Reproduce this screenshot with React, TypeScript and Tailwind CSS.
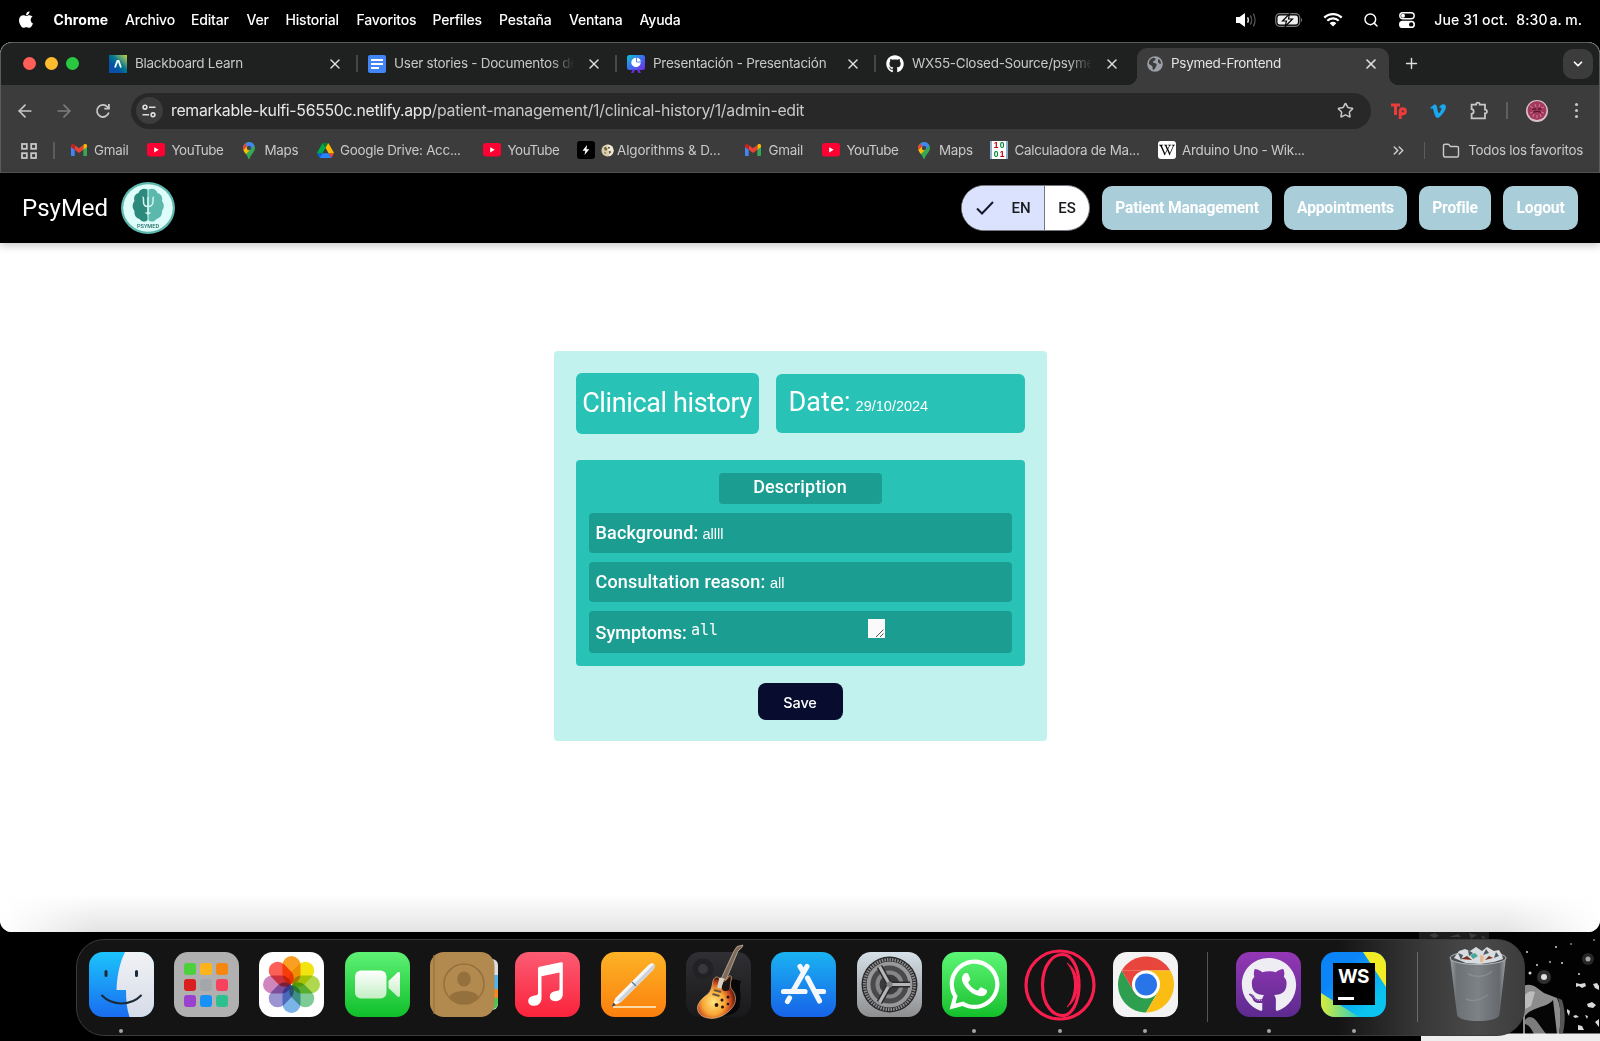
import React from "react";
import { FaApple, FaGithub, FaVimeoV, FaWikipediaW, FaWhatsapp } from "react-icons/fa";
import {
  ArrowLeft,
  ArrowRight,
  ChevronDown,
  ChevronsRight,
  Folder,
  Plus,
  Search,
  Star,
  X,
} from "lucide-react";

/* ---------- small icons ---------- */

const Gmail = () => (
  <svg viewBox="0 0 24 18" className="h-[12px] w-[16px]">
    <path d="M0 2v14.4C0 17.300.7 18 1.600 18H5.500V8.600z" fill="#4285f4" />
    <path d="M18.500 18h3.900c.9 0 1.600-.7 1.600-1.600V2l-5.500 6.600z" fill="#34a853" />
    <path d="M18.500 1.600v7L24 4.500V2.500c0-2-2.300-3.200-4-2z" fill="#fbbc04" />
    <path d="M5.500 8.600v-7L12 6.500l6.500-4.900v7L12 13.500z" fill="#ea4335" />
    <path d="M0 2.500v2l5.500 4.100v-7L4 .5C2.300-.7 0 .5 0 2.500z" fill="#c5221f" />
  </svg>
);

const YouTube = () => (
  <svg viewBox="0 0 18 14" className="h-[14px] w-[18px]">
    <rect width="18" height="13.500" rx="3" fill="#ff0033" />
    <path d="M7.200 4.200v5.200l4.500-2.600z" fill="#fff" />
  </svg>
);

const MapPin = () => (
  <svg viewBox="0 0 12 17" className="h-[17px] w-[12px]">
    <defs>
      <clipPath id="pin">
        <path d="M6 0a6 6 0 0 1 6 6c0 2.500-1.300 3.900-2.700 5.700C7.700 13.700 7.100 15 6.800 16.200c-.2 1-1.400 1-1.600 0C4.900 15 4.300 13.700 2.700 11.700 1.300 9.900 0 8.500 0 6a6 6 0 0 1 6-6z" />
      </clipPath>
    </defs>
    <g clipPath="url(#pin)">
      <rect width="12" height="17" fill="#34a853" />
      <path d="M0 4l7-6 6 1v3L6 9z" fill="#4285f4" />
      <path d="M-1 2.500L2 1 4.500 5 1 9-1 7z" fill="#ea4335" />
      <path d="M0 8.500L4.500 4 8 7 2.500 12.500z" fill="#fbbc04" />
    </g>
    <circle cx="6" cy="6" r="2.200" fill="#37474f" />
  </svg>
);

const Drive = () => (
  <svg viewBox="0 0 87.300 78" className="h-[15px] w-[17px]">
    <path d="M6.600 66.850l3.850 6.650c.8 1.400 1.950 2.500 3.300 3.300L27.500 53H0c0 1.550.4 3.100 1.200 4.500z" fill="#0066da" />
    <path d="M43.650 25L29.900 1.200c-1.350.8-2.500 1.900-3.300 3.300L1.200 48.500A9 9 0 0 0 0 53h27.500z" fill="#00ac47" />
    <path d="M73.550 76.800c1.350-.8 2.500-1.900 3.300-3.300l1.600-2.750L86.100 57.500c.8-1.400 1.200-2.950 1.200-4.500H59.800l5.850 11.500z" fill="#ea4335" />
    <path d="M43.650 25L57.400 1.200C56.050.4 54.500 0 52.900 0H34.400c-1.600 0-3.150.45-4.500 1.200z" fill="#00832d" />
    <path d="M59.800 53H27.500L13.750 76.800c1.350.8 2.900 1.200 4.500 1.200h50.800c1.600 0 3.150-.45 4.500-1.200z" fill="#2684fc" />
    <path d="M73.400 26.500L60.700 4.500c-.8-1.400-1.950-2.500-3.300-3.300L43.650 25 59.800 53h27.450c0-1.550-.4-3.100-1.200-4.500z" fill="#ffba00" />
  </svg>
);

const Bolt = () => (
  <span className="flex items-center gap-[6px]">
    <svg viewBox="0 0 18 18" className="size-[18px]">
      <rect width="18" height="18" rx="3" fill="#000" />
      <path d="M10 4L5.500 9.700h2.800L7.500 14l4.800-5.700H9.500z" fill="#fff" />
    </svg>
    <svg viewBox="0 0 14 14" className="size-[13px]">
      <circle cx="7" cy="7" r="6.500" fill="#d8cda8" />
      <path d="M7 .5A6.500 6.500 0 0 1 13.500 7c0 3-2 5.500-4.500 6.200L7.500 9z" fill="#f1ecdb" />
      <path d="M3 4l2-1 2 2-1 2-2 0zM8 8l2-1 1 2-2 2zM3 9l2 0 0 2z" fill="#77683f" />
      <circle cx="8.500" cy="4" r="1" fill="#4b4330" />
    </svg>
  </span>
);

const Matrix = () => (
  <span className="grid h-[18px] w-[18px] grid-cols-2 grid-rows-2 border-x-2 border-[#8fb0cc] bg-white px-px text-center font-['Liberation_Sans'] text-[8.500px] font-bold leading-[9px] tracking-normal">
    <span className="text-red-700">1</span>
    <span className="text-green-700">0</span>
    <span className="text-green-700">0</span>
    <span className="text-red-700">1</span>
  </span>
);

const Wiki = () => (
  <span className="flex size-[18px] items-center justify-center rounded-[3px] bg-white text-black">
    <FaWikipediaW size={16} />
  </span>
);

const Blackboard = () => (
  <span className="flex size-[18px] items-center justify-center bg-linear-to-tr from-[#0a4fa8] from-30% via-[#0b7f86] via-60% to-[#b9d51c]">
    <svg viewBox="0 0 18 18" className="size-[18px]">
      <path d="M6 12.500L8.400 6h1.200l2.400 6.500" fill="none" stroke="#fff" strokeWidth="1.800" />
    </svg>
  </span>
);

const Docs = () => (
  <span className="flex size-[18px] flex-col justify-center gap-[2px] rounded-[2px] bg-[#4285f4] pl-[3px]">
    <span className="h-[2px] w-[12px] bg-white" />
    <span className="h-[2px] w-[12px] bg-white" />
    <span className="h-[2px] w-[8px] bg-white" />
  </span>
);

const Slides = () => (
  <svg viewBox="0 0 18 18" className="size-[18px]">
    <defs>
      <linearGradient id="sl" x1="0" y1="0" x2="1" y2="1">
        <stop offset="0" stopColor="#10c5d0" />
        <stop offset=".5" stopColor="#3b6df0" />
        <stop offset="1" stopColor="#7a2be0" />
      </linearGradient>
    </defs>
    <rect width="18" height="15" rx="2.500" fill="url(#sl)" />
    <path d="M6 14l-2 4h2.500L8 15zM12 14l2 4h-2.500L10 15z" fill="#6b2fd9" />
    <circle cx="9" cy="7.500" r="4.700" fill="#fff" />
    <path d="M9.500 2.300v4.700h4.700a4.700 4.700 0 0 0-4.700-4.700z" fill="#fff" stroke="#3b7df0" strokeWidth=".9" />
  </svg>
);

const Globe = () => (
  <svg viewBox="0 0 16 16" className="size-[16px]">
    <circle cx="8" cy="8" r="7.800" fill="#9aa0a6" />
    <path d="M6.500 1.800c1.500.2 2.500 1 2 2C8 5 6 4.700 6 6s2.300 1 3.300 1.800C10.500 9 9 10.300 8.500 11.500 8 13 7 14 5.800 13.500c-.8-1 .3-2.300-.6-3.300C4.200 9.200 2.200 8.500 1.800 7.200 2 4.500 4 2.200 6.500 1.800zM11.500 3c1.500 1 2.500 2.700 2.600 4.500-1 .6-2 .2-2.600-.7-.7-1-.8-2.800 0-3.800z" fill="#3c3c3c" />
  </svg>
);

const Sep = ({ className = "" }: { className?: string }) => (
  <span className={`h-[17px] w-[1.500px] shrink-0 bg-[#5b5d5d] ${className}`} />
);

/* ---------- macOS menu bar ---------- */

const menus = [
  ["Archivo", "w-[66px]"],
  ["Editar", "w-[55.500px]"],
  ["Ver", "w-[39px]"],
  ["Historial", "w-[71px]"],
  ["Favoritos", "w-[76px]"],
  ["Perfiles", "w-[66.500px]"],
  ["Pestaña", "w-[70px]"],
  ["Ventana", "w-[70.500px]"],
  ["Ayuda", "w-[50px]"],
];

const MenuBar = () => (
  <div className="flex h-[42px] shrink-0 items-center bg-black pb-[3px] text-[14px] font-medium text-white">
    <FaApple className="ml-[18px] mr-[19.500px] h-[19px] w-[16px]" />
    <span className="w-[71.500px] font-bold tracking-[0.100px]">Chrome</span>
    {menus.map(([label, w]) => (
      <span key={label} className={`${w} tracking-[-0.200px]`}>
        {label}
      </span>
    ))}
    <div className="ml-auto flex items-center pr-[18px]">
      <svg viewBox="0 0 22 16" className="mr-[18px] h-[16px] w-[22px]">
        <path d="M1 5h3.500L10 1v14l-5.500-4H1z" fill="#fff" />
        <path d="M12.500 5.300c1 1.500 1 3.900 0 5.400" stroke="#ddd" strokeWidth="1.400" fill="none" />
        <path d="M15.300 3.500c1.700 2.500 1.700 6.500 0 9M18.200 1.700c2.400 3.700 2.400 8.900 0 12.600" stroke="#555" strokeWidth="1.400" fill="none" />
      </svg>
      <svg viewBox="0 0 28 14" className="mr-[20px] h-[14px] w-[28px]">
        <rect x=".7" y=".7" width="24" height="12.600" rx="4" fill="none" stroke="#777" strokeWidth="1.200" />
        <rect x="2.500" y="2.500" width="20.400" height="9" rx="2.300" fill="#eee" />
        <path d="M26 5v4c1.500-.5 1.500-3.500 0-4z" fill="#777" />
        <path d="M14.500.8L7.500 8h4l-1.300 5.400L17.500 6h-4z" fill="#eee" stroke="#000" strokeWidth="1.200" />
      </svg>
      <svg viewBox="0 0 20 15" className="mr-[20px] h-[15px] w-[20px]">
        <path d="M1.300 5.600a12.400 12.400 0 0 1 17.400 0M4.300 8.800a8.100 8.100 0 0 1 11.400 0" fill="none" stroke="#fff" strokeWidth="2.300" />
        <path d="M6.700 11.200a4.700 4.700 0 0 1 6.600 0L10 14.500z" fill="#fff" />
      </svg>
      <Search className="mr-[20px] size-[16px]" strokeWidth={2.200} />
      <svg viewBox="0 0 16 16" className="mr-[19px] h-[16px] w-[16px]">
        <rect x=".8" y=".8" width="14.400" height="6" rx="3" fill="none" stroke="#fff" strokeWidth="1.400" />
        <circle cx="4" cy="3.800" r="2" fill="#fff" />
        <rect x="0" y="8.800" width="16" height="7.200" rx="3.600" fill="#fff" />
        <circle cx="12.200" cy="12.400" r="2.200" fill="#000" />
      </svg>
      <span className="tracking-[0.150px]">Jue 31 oct.</span>
      <span className="ml-[8px] tracking-[0.100px]">8:30</span>
      <span className="ml-[2px]">a. m.</span>
    </div>
  </div>
);

/* ---------- Chrome window ---------- */

const tabs = [
  { icon: <Blackboard />, label: "Blackboard Learn", fade: false, sep: true },
  { icon: <Docs />, label: "User stories - Documentos de", fade: true, sep: true },
  { icon: <Slides />, label: "Presentación - Presentación", fade: false, sep: true },
  { icon: <FaGithub size={18} color="#fff" />, label: "WX55-Closed-Source/psyme", fade: true, sep: false },
];

const TabStrip = () => (
  <div className="flex h-[42px] items-center bg-[#1f2020] pb-px text-[13.500px] tracking-[-0.270px] text-[#c7c7c7]">
    <div className="flex w-[108px] shrink-0 gap-[8.500px] pl-[22px]">
      <span className="size-[13px] rounded-full bg-[#ff5f57]" />
      <span className="size-[13px] rounded-full bg-[#febc2e]" />
      <span className="size-[13px] rounded-full bg-[#28c840]" />
    </div>
    {tabs.map((t) => (
      <div key={t.label} className="flex w-[259px] shrink-0 items-center">
        {t.icon}
        <span
          className={`ml-[8px] w-[184px] overflow-hidden whitespace-nowrap ${
            t.fade ? "mask-r-from-85% mask-r-to-98%" : ""
          }`}
        >
          {t.label}
        </span>
        <X className="ml-[8px] size-[16px] text-[#dedede]" strokeWidth={2.200} />
        {t.sep && <Sep className="ml-[13px] bg-[#464848]" />}
      </div>
    ))}
    <div className="relative -mb-px -ml-[8.500px] flex h-[37px] w-[252px] shrink-0 items-center self-end rounded-t-[10px] bg-[#3c3c3c] pb-[6px] pl-[10px] text-[#e3e3e3]">
      <span className="absolute -left-[10px] bottom-0 size-[10px] bg-[radial-gradient(circle_at_0_0,#1f2020_10px,#3c3c3c_10.500px)]" />
      <span className="absolute -right-[10px] bottom-0 size-[10px] bg-[radial-gradient(circle_at_100%_0,#1f2020_10px,#3c3c3c_10.500px)]" />
      <Globe />
      <span className="ml-[8.500px] w-[192px] tracking-[-0.300px]">Psymed-Frontend</span>
      <X className="size-[16px]" strokeWidth={2.400} />
    </div>
    <Plus className="ml-[14px] size-[17px] text-[#dedede]" strokeWidth={2} />
    <span className="ml-auto mr-[6px] flex size-[30px] items-center justify-center rounded-[10px] bg-[#3c3c3c]">
      <ChevronDown className="size-[14px] text-white" strokeWidth={3} />
    </span>
  </div>
);

const Toolbar = () => (
  <div className="flex h-[50px] items-center pt-px text-[#c7c7c7]">
    <ArrowLeft className="ml-[13.500px] size-[20px]" strokeWidth={2} />
    <ArrowRight className="ml-[19px] size-[20px] text-[#7d7d7d]" strokeWidth={2} />
    <svg viewBox="0 0 16 16" className="ml-[21px] size-[16px]">
      <path d="M13.800 9.500A6 6 0 1 1 12.500 4L14 5.500" fill="none" stroke="currentColor" strokeWidth="1.800" />
      <path d="M14.800 1v5.500H9.300V4.800H13V1z" fill="currentColor" />
    </svg>
    <div className="ml-[20px] flex h-[36px] w-[1240px] items-center rounded-full bg-[#282828] pl-[5px]">
      <span className="flex size-[27px] items-center justify-center rounded-full bg-[#3c3c3c]">
        <svg viewBox="0 0 14 14" className="size-[14px]" fill="none" stroke="#dedede" strokeWidth="1.600">
          <circle cx="3" cy="3.200" r="1.900" />
          <path d="M7 3.200h6.500M.5 10.800H7" />
          <circle cx="11" cy="10.800" r="1.900" />
        </svg>
      </span>
      <span className="ml-[8.500px] text-[15.800px] tracking-[-0.280px] text-[#c7c7c7]">
        <span className="text-[#e8e8e8]">remarkable-kulfi-56550c.netlify.app</span>
        /patient-management/1/clinical-history/1/admin-edit
      </span>
      <Star className="ml-auto mr-[17px] size-[17px]" strokeWidth={2.200} />
    </div>
    <svg viewBox="0 0 16 16" className="ml-[20.500px] size-[16px]" fill="none" stroke="#ec3b3b" strokeWidth="3">
      <path d="M0 2h9M4.500 2v10" />
      <circle cx="11.800" cy="8.300" r="2.600" />
      <path d="M9.200 8v8" />
    </svg>
    <FaVimeoV className="ml-[22px] text-[#17a8ef]" size={18} />
    <svg viewBox="0 0 18 18" className="ml-[22.500px] size-[19px]" fill="none" stroke="currentColor" strokeWidth="1.700">
      <path d="M1.500 3.500h4.300c-.4-2.500 3.800-2.500 3.400 0h5v4.700c2.500-.4 2.500 3.900 0 3.500v4.800H1.500v-4.300c2.700-.3 2.700-4.200 0-4.500z" />
    </svg>
    <Sep className="ml-[17.500px] bg-[#5f5f5f]" />
    <svg viewBox="0 0 22 22" className="ml-[18px] size-[22px]">
      <circle cx="11" cy="11" r="11" fill="#d9c3cb" />
      <circle cx="11" cy="10.500" r="9.500" fill="#a33a5e" />
      <path d="M4 6l3 2M9 4l1 3M14 4l-1 3M18 7l-3 1M4 13l3-1M7 17l1-3M11 18v-3M15 17l-1-3M18 13l-3-1" stroke="#d88ba3" strokeWidth=".8" />
      <path d="M6.500 9h3.500M12 9h3.500M7 12.500c2.500-1.300 5.500-1.300 8 0" stroke="#5b1730" strokeWidth="1.300" fill="none" />
    </svg>
    <span className="ml-[27px] flex flex-col gap-[3px]">
      <span className="size-[3px] rounded-full bg-[#c7c7c7]" />
      <span className="size-[3px] rounded-full bg-[#c7c7c7]" />
      <span className="size-[3px] rounded-full bg-[#c7c7c7]" />
    </span>
  </div>
);

const bookmarks = [
  { icon: <Gmail />, label: "Gmail", w: "w-[76.500px]", g: "gap-[7.500px]" },
  { icon: <YouTube />, label: "YouTube", w: "w-[96px] tracking-[-0.450px]", g: "gap-[6.500px]" },
  { icon: <MapPin />, label: "Maps", w: "w-[73.500px]", g: "gap-[9.500px]" },
  { icon: <Drive />, label: "Google Drive: Acc...", w: "w-[166.500px]", g: "gap-[6.500px]" },
  { icon: <YouTube />, label: "YouTube", w: "w-[94px] tracking-[-0.450px]", g: "gap-[6.500px]" },
  { icon: <Bolt />, label: "Algorithms & D...", w: "w-[168px] tracking-[-0.100px]", g: "gap-[3px]" },
  { icon: <Gmail />, label: "Gmail", w: "w-[77px]", g: "gap-[7.500px]" },
  { icon: <YouTube />, label: "YouTube", w: "w-[96px] tracking-[-0.450px]", g: "gap-[6.500px]" },
  { icon: <MapPin />, label: "Maps", w: "w-[72px]", g: "gap-[9px]" },
  { icon: <Matrix />, label: "Calculadora de Ma...", w: "w-[168px]", g: "gap-[6.500px]" },
  { icon: <Wiki />, label: "Arduino Uno - Wik...", w: "w-[160px]", g: "gap-[6px]" },
];

const BookmarksBar = () => (
  <div className="flex h-[38px] items-center border-b border-[#555] pb-[6px] text-[13.400px] tracking-[-0.270px] text-[#c9c9c9]">
    <svg viewBox="0 0 16 16" className="ml-[19.500px] size-[16px]" fill="none" stroke="#c7c7c7" strokeWidth="1.800">
      <rect x="1" y="1" width="4.800" height="4.800" />
      <rect x="10.200" y="1" width="4.800" height="4.800" />
      <rect x="1" y="10.200" width="4.800" height="4.800" />
      <rect x="10.200" y="10.200" width="4.800" height="4.800" />
    </svg>
    <Sep className="ml-[16.500px] mr-[16px]" />
    {bookmarks.map((b, i) => (
      <span key={i} className={`flex shrink-0 items-center whitespace-nowrap ${b.w} ${b.g}`}>
        {b.icon}
        {b.label}
      </span>
    ))}
    <ChevronsRight className="ml-auto size-[17px]" strokeWidth={2.200} />
    <Sep className="ml-[17px]" />
    <Folder className="ml-[17px] size-[18px]" strokeWidth={1.900} />
    <span className="ml-[8px] mr-[16px] whitespace-nowrap">Todos los favoritos</span>
  </div>
);

/* ---------- PsyMed page ---------- */

const Logo = () => (
  <svg viewBox="0 0 54 52" className="h-[52px] w-[54px]">
    <ellipse cx="27" cy="26" rx="27" ry="26" fill="#5db9ae" />
    <ellipse cx="27" cy="26" rx="24.800" ry="23.800" fill="#defcf9" />
    <path d="M26.500 7.500c-4-2-8 0-9 3.500-4 1-5 5-4 8-2.500 3-2.500 7 0 10-.5 4 1.500 7 5 8 2 3 6 3.500 8 1z" fill="#2c8a7d" />
    <path d="M27.500 7.500c4-2 8 0 9 3.500 4 1 5.500 5 4.500 8 2.500 3 2.500 7 0 10 .5 4-2 7-5.500 8-2 3-6 3.500-8 1z" fill="#5cb8ad" />
    <path d="M21.500 15c.5 0 1 .5 1 2v3c0 3 2 4.500 4.500 4.500s5-1.500 5-4.500v-3c0-1.500.5-2 1-2M27 15v18M24.500 31h5" fill="none" stroke="#d4f5f0" strokeWidth="1.500" />
    <text x="27" y="46" textAnchor="middle" fontSize="5.600" fontFamily="Roboto" fontWeight="500" fill="#256e66">
      PSYMED
    </text>
  </svg>
);

const navItems = [
  ["Patient Management", "w-[170px]"],
  ["Appointments", "w-[123px]"],
  ["Profile", "w-[72px]"],
  ["Logout", "w-[75px]"],
];

const AppHeader = () => (
  <header className="relative z-10 flex h-[70px] items-center bg-black font-[Roboto] shadow-[0_3px_8px_rgba(0,0,0,0.2)]">
    <span className="ml-[22px] w-[98.500px] text-[24px] text-white">PsyMed</span>
    <Logo />
    <div className="ml-auto mr-[12px] flex h-[46px] w-[129px] overflow-hidden rounded-full border border-[#75777f] bg-white text-[15px] font-medium text-[#1a1b1f]">
      <span className="flex w-[83px] items-center border-r border-[#75777f] bg-[#dae2fd] pl-[14px]">
        <svg viewBox="0 0 18 14" className="mr-[17.500px] h-[14px] w-[18px]" fill="none" stroke="#151b2c" strokeWidth="2">
          <path d="M1 7.500l5 5L17 1" />
        </svg>
        EN
      </span>
      <span className="flex flex-1 items-center justify-center">ES</span>
    </div>
    <nav className="mr-[22px] flex gap-[12px]">
      {navItems.map(([label, w]) => (
        <span
          key={label}
          className={`${w} flex h-[44px] items-center justify-center rounded-[10px] bg-[#a9cdd9] pt-[2px] text-[15.600px] font-bold tracking-[-0.150px] text-white`}
        >
          {label}
        </span>
      ))}
    </nav>
  </header>
);

const Card = () => (
  <section className="relative mx-auto mt-[108px] flex h-[390px] w-[493px] flex-col items-center rounded-[4px] bg-[#c1f2ed] px-[22px] pt-[22px] font-[Roboto] text-white">
    <div className="flex w-full justify-between">
      <h1 className="flex h-[61px] w-[183px] items-center justify-center whitespace-nowrap rounded-[6px] bg-[#28c3b6] text-[27px] tracking-[-0.380px]">
        Clinical history
      </h1>
      <div className="mt-px flex h-[59px] w-[249px] items-baseline rounded-[6px] bg-[#28c3b6] pl-[13px] pt-[8px] text-[27px]">
        Date:
        <span className="ml-[5px] font-['Liberation_Sans'] text-[14.500px]">29/10/2024</span>
      </div>
    </div>
    <div className="mt-[26px] flex h-[206px] w-full flex-col items-center rounded-[4px] bg-[#28c3b6] px-[13px] pt-[13px] text-[18px] font-medium tracking-[0.160px]">
      <h2 className="h-[31px] w-[163px] rounded-[4px] bg-[#1c9d91] text-center leading-[27px]">Description</h2>
      <div className="mt-[9px] flex h-[40px] w-full items-baseline rounded-[4px] bg-[#1c9d91] pl-[7px] pt-[6px]">
        <span className="w-[107px]">Background:</span>
        <span className="font-['Liberation_Sans'] text-[14.500px] font-normal tracking-normal">allll</span>
      </div>
      <div className="mt-[9px] flex h-[40px] w-full items-baseline rounded-[4px] bg-[#1c9d91] pl-[7px] pt-[6px]">
        <span className="w-[174.500px]">Consultation reason:</span>
        <span className="font-['Liberation_Sans'] text-[14.500px] font-normal tracking-normal">all</span>
      </div>
      <div className="mt-[9px] flex h-[42px] w-full items-start rounded-[4px] bg-[#1c9d91] pl-[7px] pt-[8px]">
        <span className="w-[95.500px] tracking-normal">Symptoms:</span>
        <span className="w-[177px] font-['DejaVu_Sans_Mono'] text-[15px] font-normal tracking-normal">all</span>
        <span className="h-[19px] w-[17px] bg-[#fafafa]">
          <svg viewBox="0 0 17 19" className="h-[19px] w-[17px]" stroke="#555" strokeWidth="1">
            <path d="M8 18l7.500-7.500M12 18l3.500-3.500" />
          </svg>
        </span>
      </div>
    </div>
    <button className="mt-[17px] h-[37px] w-[85px] rounded-[8px] bg-[#080d30] pt-[2px] font-[Inter] text-[14.500px] font-medium tracking-[-0.150px]">
      Save
    </button>
  </section>
);

/* ---------- Dock ---------- */

const Finder = () => (
  <svg viewBox="0 0 65 65" className="size-full">
    <defs>
      <linearGradient id="fb" x1="0" y1="0" x2="0" y2="1">
        <stop offset="0" stopColor="#1cc4fb" />
        <stop offset="1" stopColor="#1a6cf0" />
      </linearGradient>
      <linearGradient id="fw" x1="0" y1="0" x2="0" y2="1">
        <stop offset="0" stopColor="#f1f2f5" />
        <stop offset="1" stopColor="#d5dbe8" />
      </linearGradient>
    </defs>
    <rect width="65" height="65" fill="url(#fb)" />
    <path d="M36 0c-5 10-8 23-8.500 38h9.500c0 10 .8 19 3.500 27H65V0z" fill="url(#fw)" />
    <path d="M17 19.500v4M47.500 19.500v4" stroke="#1c2b3a" strokeWidth="3" strokeLinecap="round" />
    <path d="M13 43.500c10 10.500 29 10.500 39 0" fill="none" stroke="#1c2b3a" strokeWidth="2" strokeLinecap="round" />
  </svg>
);

const launchColors = [
  "bg-[#4cd03c]", "bg-[#fcb41a]", "bg-[#f5860f]",
  "bg-[#d91f1f]", "bg-[#a3a6aa]", "bg-[#f8415c]",
  "bg-[#9a41cf]", "bg-[#1791f5]", "bg-[#2dc08e]",
];

const Launchpad = () => (
  <span className="grid size-full grid-cols-[12px_12px_12px] content-center justify-center gap-[4px] bg-[#b0b0b0]">
    {launchColors.map((c) => (
      <span key={c} className={`${c} h-[12px] w-[12px] rounded-[3px]`} />
    ))}
  </span>
);

const petals = ["#fb9f22", "#f2e40f", "#b0d84f", "#7fcb96", "#7cb3e8", "#9a94d0", "#cf86bd", "#fb5f55"];

const Photos = () => (
  <svg viewBox="0 0 65 65" className="size-full bg-white">
    {petals.map((c, i) => (
      <rect
        key={c}
        x="23.500"
        y="4"
        width="18"
        height="28"
        rx="9"
        fill={c}
        transform={`rotate(${i * 45} 32.500 32.500)`}
        className="mix-blend-multiply"
      />
    ))}
  </svg>
);

const FaceTime = () => (
  <svg viewBox="0 0 65 65" className="size-full">
    <defs>
      <linearGradient id="ft" x1="0" y1="0" x2="0" y2="1">
        <stop offset="0" stopColor="#5ff175" />
        <stop offset="1" stopColor="#0fbf2a" />
      </linearGradient>
      <linearGradient id="fc" x1="0" y1="0" x2="0" y2="1">
        <stop offset="0" stopColor="#fff" />
        <stop offset="1" stopColor="#c3efc4" />
      </linearGradient>
    </defs>
    <rect width="65" height="65" fill="url(#ft)" />
    <rect x="10" y="18.500" width="31.500" height="28" rx="6" fill="url(#fc)" />
    <path d="M43.500 29l9-8.500c1-.8 2.500-.3 2.500 1v22c0 1.300-1.500 1.800-2.500 1l-9-8.500z" fill="url(#fc)" />
  </svg>
);

const Contacts = () => (
  <svg viewBox="0 0 68 65" className="h-[65px] w-[68px] max-w-none">
    <rect x="50" y="7" width="18" height="51" rx="6" fill="#ddd" />
    <rect x="56" y="23" width="12" height="14" fill="#4db4ee" />
    <rect x="56" y="37" width="12" height="9" fill="#f58a1f" />
    <path d="M56 46h12v5c0 4-4 7-8 7h-4z" fill="#4ac750" />
    <rect width="64.500" height="65" rx="14" fill="#b28a50" />
    <path d="M4 3v59" stroke="#9a733c" strokeWidth="1.200" />
    <g fill="#94703c">
      <circle cx="34" cy="32" r="20" fill="none" stroke="#94703c" strokeWidth="1.500" />
      <ellipse cx="34" cy="27" rx="6.800" ry="7.600" />
      <path d="M19.500 45c2-8 27-8 29 0a19.500 19.500 0 0 1-29 0z" />
    </g>
  </svg>
);

const Music = () => (
  <svg viewBox="0 0 65 65" className="size-full">
    <defs>
      <linearGradient id="mu" x1="0" y1="0" x2="0" y2="1">
        <stop offset="0" stopColor="#fb5c74" />
        <stop offset="1" stopColor="#fa233b" />
      </linearGradient>
    </defs>
    <rect width="65" height="65" fill="url(#mu)" />
    <path d="M23 16.500c0-1 .5-1.500 1.500-1.800L46 10.200c1.200-.2 1.800.3 1.800 1.500V42c0 4.500-3 7-7 7.200-3.500.2-6-1.800-6-4.700s2-4.500 5-5.200l3-.6c1.300-.3 1.700-1 1.700-2.200V20.500l-18 3.700V46c0 4.800-3 7.500-7 7.800-3.700.2-6.300-1.800-6.300-4.800s2.200-4.700 5.200-5.300l2.600-.5c1.500-.3 2-1 2-2.300z" fill="#fff" />
  </svg>
);

const Pages = () => (
  <svg viewBox="0 0 65 65" className="size-full">
    <defs>
      <linearGradient id="pg" x1="0" y1="0" x2="0" y2="1">
        <stop offset="0" stopColor="#fdb326" />
        <stop offset="1" stopColor="#fb7f0d" />
      </linearGradient>
    </defs>
    <rect width="65" height="65" fill="url(#pg)" />
    <path d="M12 55h43" stroke="#ffd9a3" strokeWidth="2" />
    <path d="M10.500 55l4-9L47 13.500c3-2.800 5-2.500 6 -1.500s1 3.500-1 6L20 50z" fill="#f5f6f8" />
    <path d="M20 50L52 18c2-2.500 2-5 1-6L16 49z" fill="#cfd3d9" />
    <path d="M10.500 55l2-4.500 2.500 2.500z" fill="#444" />
    <path d="M31 30l4 4" stroke="#5b7fa6" strokeWidth="1.500" />
  </svg>
);

const GarageBand = () => (
  <svg viewBox="0 0 65 65" className="size-full overflow-visible">
    <defs>
      <radialGradient id="gb" cx=".42" cy=".62" r=".58">
        <stop offset="0" stopColor="#ffe680" />
        <stop offset=".5" stopColor="#f9a736" />
        <stop offset=".8" stopColor="#c4431d" />
        <stop offset="1" stopColor="#4c140c" />
      </radialGradient>
      <linearGradient id="gk" x1="0" y1="0" x2="0" y2="1">
        <stop offset="0" stopColor="#303034" />
        <stop offset="1" stopColor="#19191b" />
      </linearGradient>
    </defs>
    <rect width="65" height="65" rx="14" fill="url(#gk)" />
    <circle cx="17" cy="17" r="10.500" fill="#222225" />
    <circle cx="17" cy="17" r="5" fill="#38383c" />
    <path d="M38 64c10-1 17-6 16-14 2-8-2-14 1-21l-8-2-6 8z" fill="#080809" />
    <path d="M35 27L48-1l3-4.500 6-1.500-1.500 3-3.500 3L40 28z" fill="#7d6a58" stroke="#d0c3b0" strokeWidth=".7" />
    <path d="M27 29c1-4 4-5 6-3l2 3c3 1 6-1 8-5 2-1 3 1 2 4-1 5-1 8 2 11 4 6 3 13-2 18-5 6-15 11-23 9-8-1-12-7-10-13 2-5 6-8 10-11 3-3 4-7 5-13z" fill="url(#gb)" stroke="#f3d49a" strokeWidth=".6" />
    <path d="M36 30c3 1 6-1 8-4 1 5-1 7-1 12-3 2-6 1-7-1z" fill="#191414" />
    <path d="M33.500 25.500l5 1L35 37l-4-1.500z" fill="#d8d2c4" />
    <path d="M28 38l7 2M26.500 42l7 2" stroke="#6a553c" strokeWidth="2.200" />
    <circle cx="30.500" cy="53" r="1.900" fill="#2b1208" />
    <circle cx="36" cy="48" r="1.500" fill="#2b1208" />
    <circle cx="36.500" cy="55" r="1.500" fill="#2b1208" />
    <circle cx="42" cy="52" r="1.300" fill="#2b1208" />
    <circle cx="42" cy="45" r="1.500" fill="#2b1208" />
  </svg>
);

const AppStore = () => (
  <svg viewBox="0 0 65 65" className="size-full">
    <defs>
      <linearGradient id="as" x1="0" y1="0" x2="0" y2="1">
        <stop offset="0" stopColor="#1ab3f2" />
        <stop offset="1" stopColor="#1763e8" />
      </linearGradient>
    </defs>
    <rect width="65" height="65" fill="url(#as)" />
    <g stroke="#f4f8fd" strokeWidth="5.200" strokeLinecap="round">
      <path d="M36 14.500L22.500 38M29 14.500l3 5M36.500 26L48.500 49M18.500 46l-2 3.500" />
      <path d="M12.500 39.500H34M45 39.500h7.500" />
    </g>
  </svg>
);

const Settings = () => (
  <svg viewBox="0 0 65 65" className="size-full">
    <defs>
      <linearGradient id="st" x1="0" y1="0" x2="0" y2="1">
        <stop offset="0" stopColor="#d5e0e8" />
        <stop offset="1" stopColor="#8e8e90" />
      </linearGradient>
    </defs>
    <rect width="65" height="65" fill="url(#st)" />
    <circle cx="32.500" cy="32.500" r="28" fill="#29292b" />
    <circle cx="32.500" cy="32.500" r="25" fill="none" stroke="#8f8f91" strokeWidth="3.200" strokeDasharray="1.500 1.100" />
    <circle cx="32.500" cy="32.500" r="21" fill="#4a4a4c" stroke="#99999b" strokeWidth="4" />
    <circle cx="32.500" cy="32.500" r="12" fill="#3b3b3d" stroke="#858587" strokeWidth="4" />
    <path d="M32.500 32.500H53M32.500 32.500L22.500 14.500M32.500 32.500L22.500 50.500" stroke="#29292b" strokeWidth="6" />
    <path d="M32.500 32.500H53M32.500 32.500L22.500 14.500M32.500 32.500L22.500 50.500" stroke="#b5b5b7" strokeWidth="3.200" />
    <circle cx="32.500" cy="32.500" r="3" fill="#808082" />
  </svg>
);

const WhatsApp = () => (
  <span className="flex size-full items-center justify-center bg-linear-to-b from-[#5bf675] to-[#0fc02a] text-white">
    <FaWhatsapp size={57} />
  </span>
);

const Opera = () => (
  <svg viewBox="0 0 72 72" className="-ml-[3.500px] -mt-[3px] size-[72px] max-w-none" fill="none" stroke="#fa1e4e">
    <circle cx="36" cy="36" r="34" strokeWidth="3.200" />
    <path d="M43 6.300C29 2 18.500 17 18.500 36S29 70 43 65.700C51 61 55 49 55 36S51 11 43 6.300z" strokeWidth="3.200" />
    <path d="M43 14c14 9 14 35 0 44 10-11 10-33 0-44z" fill="#fa1e4e" strokeWidth="1" />
  </svg>
);

const ChromeIcon = () => (
  <svg viewBox="0 0 65 65" className="size-full bg-[#f3f3f3]">
    <g transform="translate(33 32.500)">
      <path d="M-24.250-14A28 28 0 0 1 24.250-14H0z" fill="#e8453c" />
      <path d="M-24.250-14A28 28 0 0 0 0 28L12.100 7-12.100 7z" fill="#2e9e4f" />
      <path d="M24.250-14A28 28 0 0 1 0 28L12.100 7 0-14z" fill="#fbbd14" />
      <path d="M-24.250-14L-12.100 7 0-14z" fill="#e8453c" />
      <circle r="14" fill="#fff" />
      <circle r="11" fill="#2a74ea" />
    </g>
  </svg>
);

const GitHubDesktop = () => (
  <span className="flex size-full items-center justify-center bg-linear-to-b from-[#9437b5] to-[#5d2a8f]">
    <FaGithub size={56} color="#ededf3" />
  </span>
);

const WebStorm = () => (
  <span className="relative flex size-full items-start justify-center pt-[11px]">
    <svg viewBox="0 0 65 65" className="absolute inset-0 size-full">
      <defs>
        <linearGradient id="ws" x1="0" y1="0" x2="1" y2="1">
          <stop offset=".3" stopColor="#0b84f8" />
          <stop offset=".8" stopColor="#0ac4ef" />
        </linearGradient>
        <linearGradient id="wy" x1="0" y1="0" x2="1" y2="0">
          <stop offset="0" stopColor="#d9ea3a" />
          <stop offset="1" stopColor="#2bcfc0" />
        </linearGradient>
      </defs>
      <rect width="65" height="65" fill="url(#ws)" />
      <path d="M42 0h23v35z" fill="#f2ec25" />
      <path d="M0 41l38 24H0z" fill="url(#wy)" />
    </svg>
    <span className="relative flex size-[42px] flex-col items-start bg-black pl-[5px] pt-[3px] font-[Inter] text-[19px] font-bold leading-[22px] tracking-[-0.500px] text-white">
      WS
      <span className="mt-[9px] h-[3px] w-[16px] bg-white" />
    </span>
  </span>
);

const Trash = () => (
  <svg viewBox="0 0 65 80" className="-mt-[8px] h-[80px] w-[65px] max-w-none">
    <defs>
      <linearGradient id="tr" x1="0" y1="0" x2="1" y2="0">
        <stop offset="0" stopColor="#9aa0a4" />
        <stop offset=".12" stopColor="#6c7175" />
        <stop offset=".5" stopColor="#7d8286" />
        <stop offset=".88" stopColor="#66696d" />
        <stop offset="1" stopColor="#a0a5a9" />
      </linearGradient>
    </defs>
    <path d="M4 13h56l-6.500 57c-.5 4.500-8 7-21.500 7s-20.500-2.500-21-7z" fill="url(#tr)" />
    <ellipse cx="32" cy="14" rx="28" ry="6.500" fill="#4b4f52" stroke="#b7bbbe" strokeWidth="1" />
    <path d="M8 14l5-7 6-2 5 2 6-4 6 4 5-4 7 4 5-1 3 5 1 4-9 3-14 2-14-1z" fill="#d9dcdf" />
    <path d="M12 9l5 2-2 5zM22 6l5 3-4 3zM40 5l3 4-6 2zM50 8l3 4-5 2z" fill="#4b5b66" />
    <path d="M15 15l6-3 5 4zM39 16l4-4 4 2z" fill="#7a2f22" />
    <path d="M24 11l5-2 3 3-5 3z" fill="#48a89b" />
    <path d="M34 11l4 1-1 6h-3z" fill="#e6b98c" />
    <path d="M22 30c8 4 18 3 24-3M20 55c8 4 16 0 22-4" stroke="#92979b" strokeWidth="1.500" fill="none" opacity=".6" />
  </svg>
);

type DockApp = { el: React.ReactNode; clip?: boolean; dot?: boolean };

const DockIcon = ({ el, clip = true, dot = false }: DockApp) => (
  <span className="relative size-[65px] shrink-0">
    <span className={`block size-[65px] ${clip ? "overflow-hidden rounded-[14px]" : ""}`}>{el}</span>
    {dot && <span className="absolute -bottom-[16px] left-[30.500px] size-[4px] rounded-full bg-[#a5a5a5]" />}
  </span>
);

const mainApps: DockApp[] = [
  { el: <Finder />, dot: true },
  { el: <Launchpad /> },
  { el: <Photos /> },
  { el: <FaceTime /> },
  { el: <Contacts />, clip: false },
  { el: <Music /> },
  { el: <Pages /> },
  { el: <GarageBand />, clip: false },
  { el: <AppStore /> },
  { el: <Settings /> },
  { el: <WhatsApp />, dot: true },
  { el: <Opera />, clip: false, dot: true },
  { el: <ChromeIcon />, dot: true },
];

const Wallpaper = () => (
  <svg viewBox="0 0 181 109" className="absolute bottom-0 right-0 h-[109px] w-[181px]">
    <rect width="181" height="109" fill="#020202" />
    <path d="M0 0h70v8H0z" fill="#1c1c1c" />
    <path d="M10 3l6-2 4 3-5 2zM30 5l9-3 3 3zM50 1l8 2-6 4zM62 4l5 1-3 2z" fill="#3a3a3a" />
    <path d="M104 54c9-4 14 2 21 7l13 5c5 10 4 26 2 36h-36z" fill="#8d8d8d" />
    <path d="M106 84c8-10 22-8 28-16l4 34h-32z" fill="#060606" />
    <path d="M106 88c4-6 10-2 13 3l8 11h-12c-3-6-5-9-9-10z" fill="#7c7c7c" />
    <path d="M139 66l4 2c4 12 3 24 1 33h-4c2-12 2-24-1-35z" fill="#555" />
    <path d="M104 66c3-6 8-8 12-6l-4 14-8 4z" fill="#bcbcbc" />
    <g fill="#d9d9d9">
      <circle cx="125" cy="45" r="3" />
      <circle cx="169" cy="27" r="2.500" opacity=".7" />
      <circle cx="111" cy="41" r="1.500" />
      <circle cx="108" cy="20" r="1" />
      <circle cx="118" cy="33" r="1" />
      <circle cx="137" cy="15" r="1" />
      <circle cx="143" cy="31" r="1" />
      <circle cx="131" cy="30" r="1.200" opacity=".6" />
      <circle cx="152" cy="12" r=".8" />
      <circle cx="175" cy="8" r=".8" />
      <circle cx="160" cy="42" r="1" />
      <path d="M157 51l4 1 5-1 1 3-4 2-3-2-3 1zM174 52l4-1 2 3v4l-4-2zM148 77l3 2-1 5-2-4zM168 72l5-2 4 3-3 3-5-1zM154 84l3-1 3 2-4 1zM176 90l4-3v8zM159 93l4 1 2 4h-6zM166 83l3 1-1 3z" />
    </g>
    <circle cx="125" cy="45" r="7" fill="#fff" opacity=".18" />
    <circle cx="169" cy="27" r="6" fill="#fff" opacity=".15" />
    <rect x="2" y="101.500" width="179" height="8" fill="#eee" />
  </svg>
);

const Dock = () => (
  <div className="relative flex h-[97px] w-[1449px] rounded-[28px] border border-[#3b3b3b] bg-[linear-gradient(to_right,#141414_0px,#141414_1260px,#3a3a3a_1350px,#4a4a4a_1400px,#3c3c3c_1449px)] pl-[12px] pt-[12px]">
    <div className="flex gap-[20.350px]">
      {mainApps.map((a, i) => (
        <DockIcon key={i} {...a} />
      ))}
    </div>
    <span className="ml-[29px] h-[70px] w-px bg-[#555]" />
    <div className="ml-[28.500px] flex gap-[20.350px]">
      <DockIcon el={<GitHubDesktop />} dot />
      <DockIcon el={<WebStorm />} dot />
    </div>
    <span className="ml-[30.500px] h-[70px] w-px bg-[#6a6a6a]" />
    <span className="ml-[28px]">
      <Trash />
    </span>
  </div>
);

export default function App() {
  return (
    <div className="flex h-[1041px] w-[1600px] flex-col overflow-hidden bg-black font-[Inter,sans-serif]">
      <MenuBar />
      <div className="flex h-[890px] shrink-0 flex-col overflow-hidden rounded-[12px] bg-white">
        <div className="rounded-t-[12px] border border-b-0 border-[#5a5c5c] bg-[#3c3c3c]">
          <div className="overflow-hidden rounded-t-[11px]">
            <TabStrip />
          </div>
          <Toolbar />
          <BookmarksBar />
        </div>
        <AppHeader />
        <main className="relative flex-1 bg-white">
          <div className="absolute bottom-0 left-0 h-[38px] w-full bg-linear-to-t from-[#e3e3e3] to-transparent mask-x-from-94% mask-x-to-100%" />
          <Card />
        </main>
      </div>
      <div className="relative flex flex-1 items-start justify-center pt-[7px]">
        <Wallpaper />
        <Dock />
      </div>
    </div>
  );
}
